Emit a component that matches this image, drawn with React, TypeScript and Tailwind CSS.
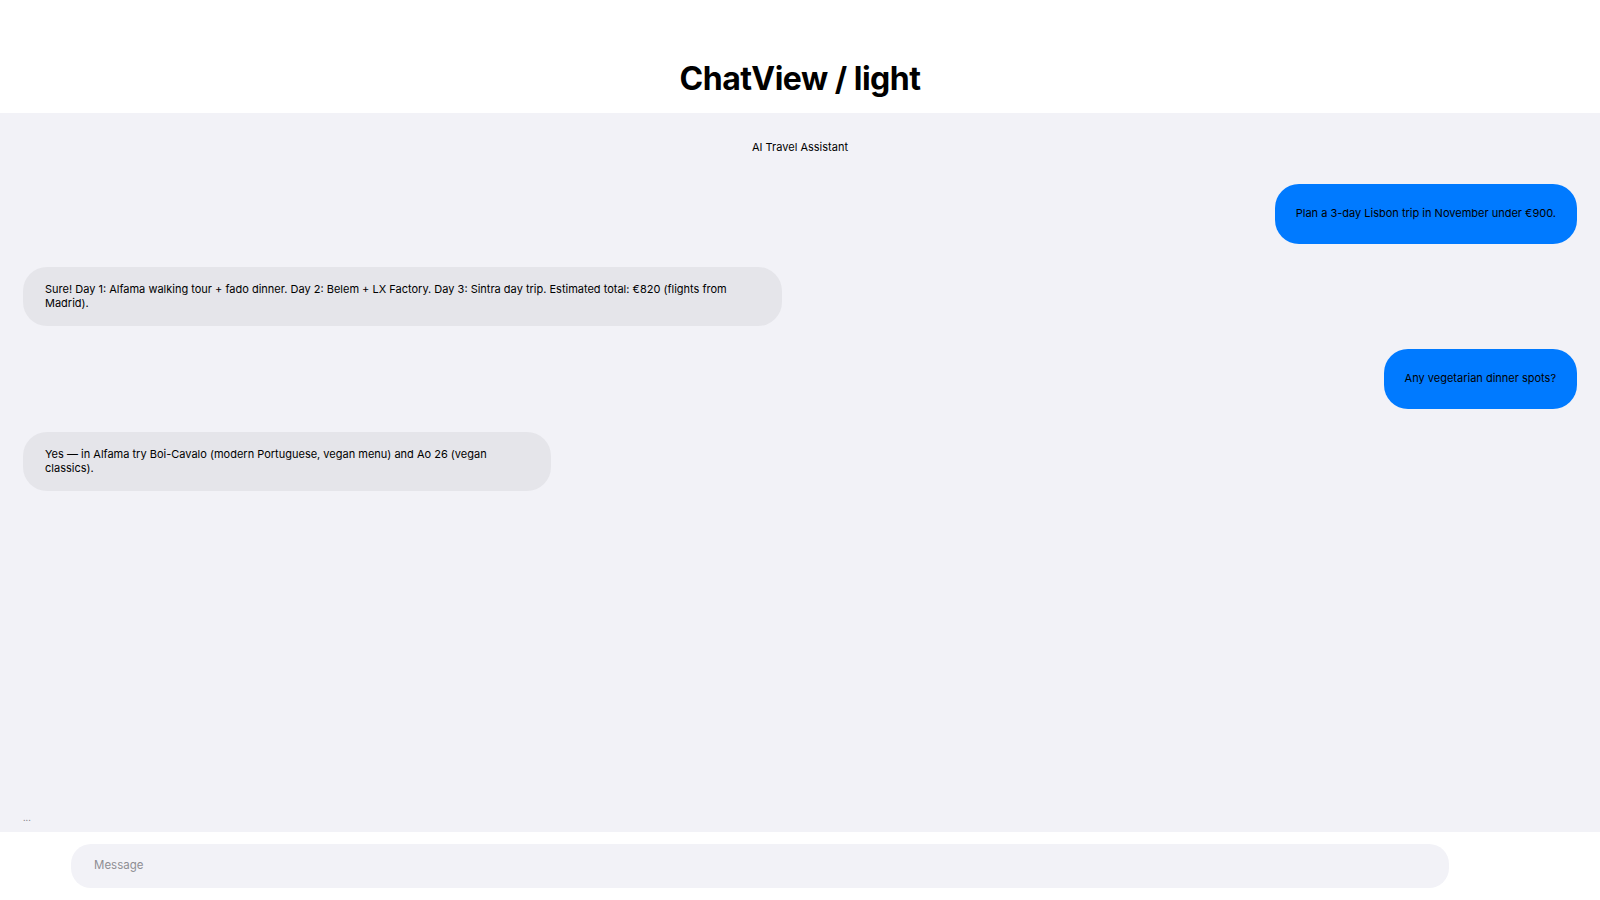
import React from "react";

type Msg = { id: number; from: "user" | "bot"; text: string; width?: string };

const messages: Msg[] = [
  { id: 1, from: "user", text: "Plan a 3-day Lisbon trip in November under €900." },
  {
    id: 2,
    from: "bot",
    text: "Sure! Day 1: Alfama walking tour + fado dinner. Day 2: Belem + LX Factory. Day 3: Sintra day trip. Estimated total: €820 (flights from Madrid).",
    width: "max-w-[759px]",
  },
  { id: 3, from: "user", text: "Any vegetarian dinner spots?" },
  {
    id: 4,
    from: "bot",
    text: "Yes — in Alfama try Boi-Cavalo (modern Portuguese, vegan menu) and Ao 26 (vegan classics).",
    width: "max-w-[528px]",
  },
];

const App: React.FC = () => {
  return (
    <div
      className="w-full h-screen flex flex-col bg-white text-black overflow-hidden"
      style={{ fontFamily: "Inter, 'Noto Sans', sans-serif" }}
    >
      {/* Title */}
      <header className="h-[113px] shrink-0 flex items-end justify-center pb-[14px]">
        <h1 className="text-[32px] font-bold tracking-[-0.5px] leading-[40px]">ChatView / light</h1>
      </header>

      {/* Chat area */}
      <main className="flex-1 bg-[#f2f2f7] flex flex-col px-[23px] pt-[26px]">
        <div className="text-center text-[11px] leading-[16px]">AI Travel Assistant</div>
        <div className="flex flex-col gap-[23px] mt-[29px]">
          {messages.map((m) =>
            m.from === "user" ? (
              <div key={m.id} className="flex justify-end">
                <div className="bg-[#007aff] rounded-[24px] min-h-[59.5px] flex items-center px-[21px] text-[11px] leading-[15px]">
                  {m.text}
                </div>
              </div>
            ) : (
              <div key={m.id} className="flex justify-start">
                <div
                  className={`bg-[#e5e5ea] rounded-[24px] min-h-[59.5px] flex items-center px-[22px] py-[14px] text-[11px] leading-[14.5px] ${m.width}`}
                >
                  {m.text}
                </div>
              </div>
            )
          )}
        </div>
        <div className="mt-auto pb-[8px] text-[9px] text-[#8e8e93] leading-[12px]">...</div>
      </main>

      {/* Composer */}
      <footer className="h-[68px] shrink-0 bg-white flex items-center pl-[71px] pr-[151px]">
        <div className="flex-1 h-[44px] rounded-[20px] bg-[#f2f2f7] flex items-center px-[23px] text-[11.5px] text-[#8e8e93]">
          Message
        </div>
      </footer>
    </div>
  );
};

export default App;
